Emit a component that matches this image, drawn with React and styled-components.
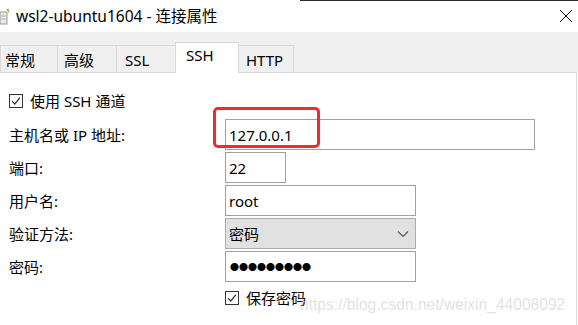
import React from "react";
import styled, { createGlobalStyle } from "styled-components";

const GlobalStyle = createGlobalStyle`
  html, body {
    margin: 0;
    padding: 0;
    background: #ffffff;
  }
  body {
    font-family: "Noto Sans", "Noto Sans CJK SC", sans-serif;
    color: #000000;
  }
`;

const Window = styled.div`
  position: relative;
  width: 578px;
  height: 325px;
  overflow: hidden;
  background: #ffffff;
  display: flex;
  flex-direction: column;
`;

const TitleBar = styled.div`
  position: relative;
  height: 32px;
  flex: none;
  display: flex;
  align-items: center;
  background: #ffffff;

  &::before {
    content: "";
    position: absolute;
    top: 0;
    left: 300px;
    right: 0;
    height: 1px;
    background: #2b2b2b;
  }
`;

const AppIcon = styled.svg`
  width: 9px;
  height: 16px;
  margin-top: 2px;
  flex: none;
`;

const Title = styled.div`
  margin-left: 7px;
  font-size: 15.5px;
  line-height: 20px;
  color: #000000;
`;

const CloseButton = styled.svg`
  margin-left: auto;
  margin-right: 5px;
  width: 14px;
  height: 14px;
`;

const TabStrip = styled.div`
  height: 40px;
  flex: none;
  display: flex;
  align-items: flex-end;
  background: #f0f0f0;
`;

const Tab = styled.div`
  box-sizing: border-box;
  width: ${({ $w }) => $w}px;
  height: ${({ $active }) => ($active ? 31 : 27)}px;
  margin-bottom: ${({ $active }) => ($active ? -1 : 0)}px;
  padding-left: ${({ $pad }) => $pad}px;
  padding-top: ${({ $active }) => ($active ? 3 : 5)}px;
  border: 1px solid #d9d9d9;
  border-bottom: none;
  margin-right: -1px;
  background: ${({ $active }) => ($active ? "#ffffff" : "#f0f0f0")};
  font-size: 15px;
  line-height: 18px;
  position: relative;
  z-index: ${({ $active }) => ($active ? 2 : 1)};
`;

const Panel = styled.div`
  flex: 1;
  box-sizing: border-box;
  border-top: 1px solid #d9d9d9;
  border-right: 1px solid #d9d9d9;
  margin-right: 1px;
  background: #ffffff;
  padding: 19px 0 0 9px;
  display: flex;
  flex-direction: column;
`;

const CheckRow = styled.label`
  display: flex;
  align-items: center;
  gap: 7px;
  font-size: 15px;
  line-height: 18px;
  margin-left: ${({ $indent }) => $indent || 0}px;
  margin-top: ${({ $top }) => $top || 0}px;
`;

const Box = styled.svg`
  width: 14px;
  height: 14px;
  flex: none;
`;

const Form = styled.div`
  margin-top: 9px;
  display: grid;
  grid-template-columns: 216px auto;
  row-gap: 2px;
  align-items: center;
`;

const Label = styled.div`
  font-size: 15px;
  line-height: 18px;
`;

const FieldWrap = styled.div`
  position: relative;
  width: ${({ $w }) => $w}px;
`;

const Input = styled.div`
  box-sizing: border-box;
  width: ${({ $w }) => $w}px;
  height: 31px;
  border: 1px solid #a0a0a0;
  background: #ffffff;
  display: flex;
  align-items: center;
  padding-left: 3px;
  font-size: 15px;
  color: #000000;
`;

const Select = styled(Input)`
  background: #e1e1e1;
  border-color: #adadad;
  justify-content: space-between;
  padding-right: 6px;
`;

const Dots = styled.span`
  font-size: 9px;
  letter-spacing: 0px;
  padding-left: 1px;
`;

const Highlight = styled.div`
  position: absolute;
  left: -12px;
  top: -12px;
  width: 107px;
  height: 41px;
  box-sizing: border-box;
  border: 3px solid #f42a2a;
  border-radius: 5px;
  pointer-events: none;
`;

const Watermark = styled.div`
  position: absolute;
  left: 300px;
  top: 296px;
  font-family: "Liberation Sans", Arial, sans-serif;
  font-size: 15.6px;
  color: rgba(200, 200, 200, 0.55);
`;

const Check = () => (
  <Box viewBox="0 0 14 14">
    <rect x="0.5" y="0.5" width="13" height="13" fill="#fff" stroke="#333" />
    <path d="M3 7.2 L5.8 10 L11 3.6" fill="none" stroke="#333" strokeWidth="1.2" />
  </Box>
);

const tabs = [
  { name: "常规", w: 58, pad: 4 },
  { name: "高级", w: 60, pad: 6 },
  { name: "SSL", w: 60, pad: 8 },
  { name: "SSH", w: 64, pad: 10, active: true },
  { name: "HTTP", w: 56, pad: 7 },
];

export default function App() {
  return (
    <>
      <GlobalStyle />
      <Window>
        <TitleBar>
          <AppIcon viewBox="0 0 9 16">
            <rect x="0" y="3" width="7" height="12" fill="#e8e8e8" stroke="#9a9a9a" />
            <line x1="1" y1="7" x2="6" y2="7" stroke="#b0b0b0" />
            <line x1="1" y1="10" x2="6" y2="10" stroke="#b0b0b0" />
            <path d="M6 0 L9 0 L9 4 Z" fill="#8cc63f" />
          </AppIcon>
          <Title>wsl2-ubuntu1604 - 连接属性</Title>
          <CloseButton viewBox="0 0 14 14">
            <path d="M1 1 L13 13 M13 1 L1 13" stroke="#111" strokeWidth="1" />
          </CloseButton>
        </TitleBar>
        <TabStrip>
          {tabs.map((t) => (
            <Tab key={t.name} $w={t.w} $pad={t.pad} $active={t.active}>
              {t.name}
            </Tab>
          ))}
        </TabStrip>
        <Panel>
          <CheckRow>
            <Check />
            使用 SSH 通道
          </CheckRow>
          <Form>
            <Label>主机名或 IP 地址:</Label>
            <FieldWrap $w={310}>
              <Input $w={310}>127.0.0.1</Input>
              <Highlight />
            </FieldWrap>
            <Label>端口:</Label>
            <Input $w={61}>22</Input>
            <Label>用户名:</Label>
            <Input $w={191}>root</Input>
            <Label>验证方法:</Label>
            <Select $w={191}>
              密码
              <svg width="12" height="8" viewBox="0 0 12 8">
                <path d="M1 1.5 L6 6.5 L11 1.5" fill="none" stroke="#555" strokeWidth="1.1" />
              </svg>
            </Select>
            <Label>密码:</Label>
            <Input $w={191}>
              <Dots>●●●●●●●●●</Dots>
            </Input>
          </Form>
          <CheckRow $indent={216} $top={7}>
            <Check />
            保存密码
          </CheckRow>
        </Panel>
        <Watermark>https://blog.csdn.net/weixin_44008092</Watermark>
      </Window>
    </>
  );
}
